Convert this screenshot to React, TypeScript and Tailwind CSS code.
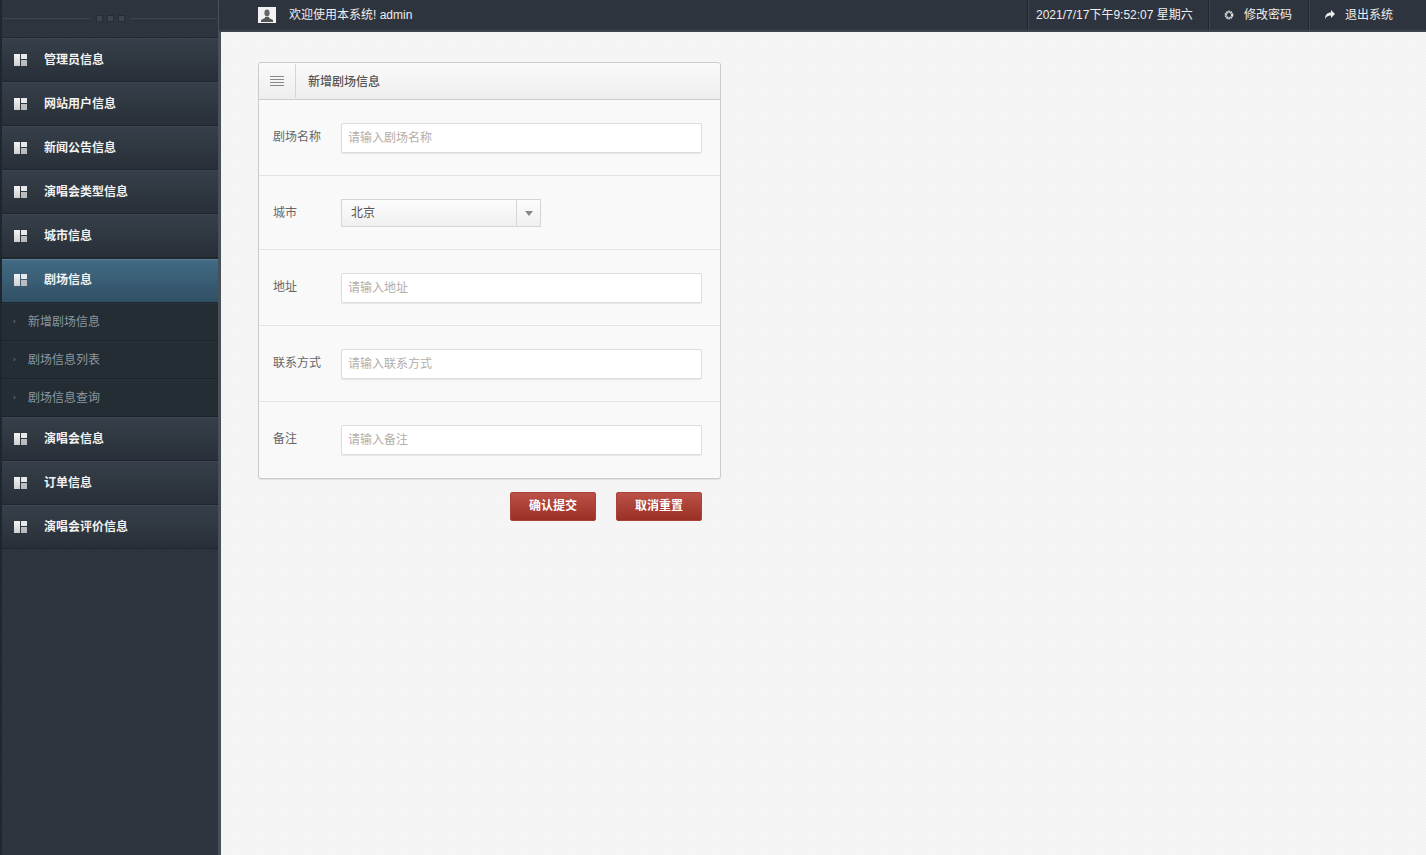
const font = { fontFamily: '"Liberation Sans", "Noto Sans CJK SC", sans-serif' };

function WidgetIcon() {
  return (
    <svg width="14" height="14" viewBox="0 0 14 14" className="shrink-0">
      <defs>
        <linearGradient id="wg" x1="0" y1="0" x2="0" y2="1">
          <stop offset="0" stopColor="#f4f4f4" />
          <stop offset="1" stopColor="#d0d0d0" />
        </linearGradient>
      </defs>
      <rect x="0" y="1" width="6" height="12" fill="url(#wg)" />
      <rect x="7" y="1" width="6" height="5" fill="#e8e8e8" />
      <rect x="7" y="7" width="6" height="6" fill="#bcbcbc" />
    </svg>
  );
}

function NavItem({ label, active }: { label: string; active?: boolean }) {
  return (
    <div
      className={`flex items-center pl-[12px] border-b border-t ${
        active
          ? 'h-[45px] pb-px bg-gradient-to-b from-[#436b85] to-[#305064] border-t-[#1f272e] border-b-[#1f272e] shadow-[inset_0_1px_0_#5a7d94]'
          : 'h-[44px] bg-gradient-to-b from-[#363f49] to-[#282f38] border-t-[#3d4650] border-b-[#1f272e]'
      }`}
    >
      <WidgetIcon />
      <span className="ml-[16px] text-[12px] font-bold text-[#f2f2f2]">{label}</span>
    </div>
  );
}

function SubItem({ label }: { label: string }) {
  return (
    <div className="h-[38px] flex items-center pl-[11px] bg-[#242c34] border-b border-[#1b2228] border-t border-t-[#2a323a]">
      <span className="text-[8px] text-[#7a8791] w-[15px]">›</span>
      <span className="text-[12px] text-[#8b979f]">{label}</span>
    </div>
  );
}

function FormRow({ label, height, children, last }: { label: string; height: number; children: React.ReactNode; last?: boolean }) {
  return (
    <div className={`flex items-start pl-[14px] ${last ? '' : 'border-b border-[#e3e3e3]'}`} style={{ height }}>
      <label className="w-[68px] pt-[29px] text-[12px] leading-[16px] text-[#666666]">{label}</label>
      {children}
    </div>
  );
}

function TextField({ placeholder }: { placeholder: string }) {
  return (
    <input
      placeholder={placeholder}
      className="mt-[23px] w-[361px] h-[30px] pl-[6px] pr-[7px] bg-white border border-[#dddddd] rounded-[2px] text-[12px] shadow-[0_1px_1px_rgba(0,0,0,0.08)] placeholder:text-[#b5aea8] outline-none"
    />
  );
}

function TopButton({ icon, label, width }: { icon: React.ReactNode; label: string; width: string }) {
  return (
    <div className={`${width} h-full flex items-center pl-[15px] gap-[10px] border-l border-[#1f272e] shadow-[inset_1px_0_0_#3d4650]`}>
      {icon}
      <span className="text-[12px] text-[#eeeeee]">{label}</span>
    </div>
  );
}

export default function App() {
  return (
    <div className="flex h-[855px] w-[1426px] overflow-hidden bg-[#f5f5f5]" style={font}>
      <aside className="w-[221px] h-full shrink-0 bg-[#2d343d] bg-[radial-gradient(rgba(255,255,255,0.02)_1px,transparent_1px)] bg-[size:3px_3px] border-l-2 border-r-[3px] border-l-[#1f272e] border-r-[#48515a]">
        <div className="h-[38px] flex items-center pl-[1px] border-b border-[#1f272e]">
          <div className="w-[87px] h-px bg-[#3d4650]" />
          <div className="flex gap-[4px] ml-[6px] mr-[5px]">
            <div className="w-[7px] h-[7px] bg-[#3d4650] border border-[#262d35]" />
            <div className="w-[7px] h-[7px] bg-[#3d4650] border border-[#262d35]" />
            <div className="w-[7px] h-[7px] bg-[#3d4650] border border-[#262d35]" />
          </div>
          <div className="w-[87px] h-px bg-[#3d4650]" />
        </div>
        <NavItem label="管理员信息" />
        <NavItem label="网站用户信息" />
        <NavItem label="新闻公告信息" />
        <NavItem label="演唱会类型信息" />
        <NavItem label="城市信息" />
        <NavItem label="剧场信息" active />
        <SubItem label="新增剧场信息" />
        <SubItem label="剧场信息列表" />
        <SubItem label="剧场信息查询" />
        <NavItem label="演唱会信息" />
        <NavItem label="订单信息" />
        <NavItem label="演唱会评价信息" />
      </aside>

      <div className="flex-1 min-w-0 flex flex-col">
        <header className="h-[32px] shrink-0 flex items-center bg-[#2d343d] bg-[radial-gradient(rgba(255,255,255,0.02)_1px,transparent_1px)] bg-[size:3px_3px] border-b-2 border-[#3b444d] -ml-[2px]">
          <div className="ml-[39px] w-[18px] h-[16px] bg-[#f2f2f2] flex items-center justify-center">
            <svg width="12" height="13" viewBox="0 0 12 13">
              <ellipse cx="6" cy="4" rx="2.6" ry="3.4" fill="#666666" />
              <path d="M0 13 V11 L4 9 V8 H8 V9 L12 11 V13 Z" fill="#555555" />
            </svg>
          </div>
          <span className="ml-[13px] text-[12px] text-[#eeeeee]">欢迎使用本系统! admin</span>
          <div className="ml-auto flex h-full items-center mr-[18px]">
            <div className="w-[181px] h-full flex items-center pl-[8px] border-l border-[#1f272e] shadow-[inset_1px_0_0_#3d4650] text-[12px] text-[#eeeeee]">
              2021/7/17下午9:52:07 星期六
            </div>
            <TopButton
              width="w-[100px]"
              label="修改密码"
              icon={
                <svg width="10" height="10" viewBox="0 0 10 10">
                  <circle cx="5" cy="5" r="3.2" fill="none" stroke="#dddddd" strokeWidth="2.4" strokeDasharray="1.5 0.5" />
                </svg>
              }
            />
            <TopButton
              width="w-[100px]"
              label="退出系统"
              icon={
                <svg width="11" height="10" viewBox="0 0 11 10">
                  <path d="M7 0 L11 4 L7 8 V5.5 C4 5.5 2 6.5 1 9.5 C1 5 3 2.5 7 2.5 Z" fill="#eeeeee" />
                </svg>
              }
            />
          </div>
        </header>

        <main className="flex-1 pl-[37px] pt-[30px] bg-[radial-gradient(rgba(0,0,0,0.012)_1px,transparent_1px)] bg-[size:3px_3px]">
          <div className="w-[463px] bg-[#f9f9f9] border border-[#cccccc] rounded-[3px] shadow-[0_1px_1px_rgba(0,0,0,0.08)]">
            <div className="h-[37px] flex items-center pt-[2px] bg-gradient-to-b from-[#fafafa] to-[#eeeeee] border-b border-[#cccccc] rounded-t-[3px]">
              <div className="w-[37px] h-full -mt-[2px] flex items-center justify-center border-r border-[#d5d5d5]">
                <svg width="14" height="10" viewBox="0 0 14 10">
                  <path d="M0 .5H14M0 3.5H14M0 6.5H14M0 9.5H14" stroke="#888888" strokeWidth="1" />
                </svg>
              </div>
              <span className="ml-[12px] text-[12px] font-medium text-[#555555]">新增剧场信息</span>
            </div>
            <FormRow label="剧场名称" height={76}>
              <TextField placeholder="请输入剧场名称" />
            </FormRow>
            <FormRow label="城市" height={74}>
              <div className="mt-[23px] w-[200px] h-[28px] flex items-center bg-gradient-to-b from-[#fcfcfc] to-[#f0f0f0] border border-[#d5d5d5]">
                <span className="flex-1 pl-[9px] text-[12px] text-[#555555]">北京</span>
                <div className="w-[24px] h-full flex items-center justify-center border-l border-[#d5d5d5]">
                  <div className="w-0 h-0 border-x-[4.5px] border-x-transparent border-t-[5px] border-t-[#888888]" />
                </div>
              </div>
            </FormRow>
            <FormRow label="地址" height={76}>
              <TextField placeholder="请输入地址" />
            </FormRow>
            <FormRow label="联系方式" height={76}>
              <TextField placeholder="请输入联系方式" />
            </FormRow>
            <FormRow label="备注" height={76} last>
              <TextField placeholder="请输入备注" />
            </FormRow>
          </div>
          <div className="w-[444px] flex justify-end gap-[20px] mt-[13px]">
            <button className="w-[86px] h-[29px] pb-[2px] rounded-[2px] bg-gradient-to-b from-[#bb5147] to-[#9a2f26] border border-[#a8433a] text-[12px] font-bold text-white">确认提交</button>
            <button className="w-[86px] h-[29px] pb-[2px] rounded-[2px] bg-gradient-to-b from-[#bb5147] to-[#9a2f26] border border-[#a8433a] text-[12px] font-bold text-white">取消重置</button>
          </div>
        </main>
      </div>
    </div>
  );
}
